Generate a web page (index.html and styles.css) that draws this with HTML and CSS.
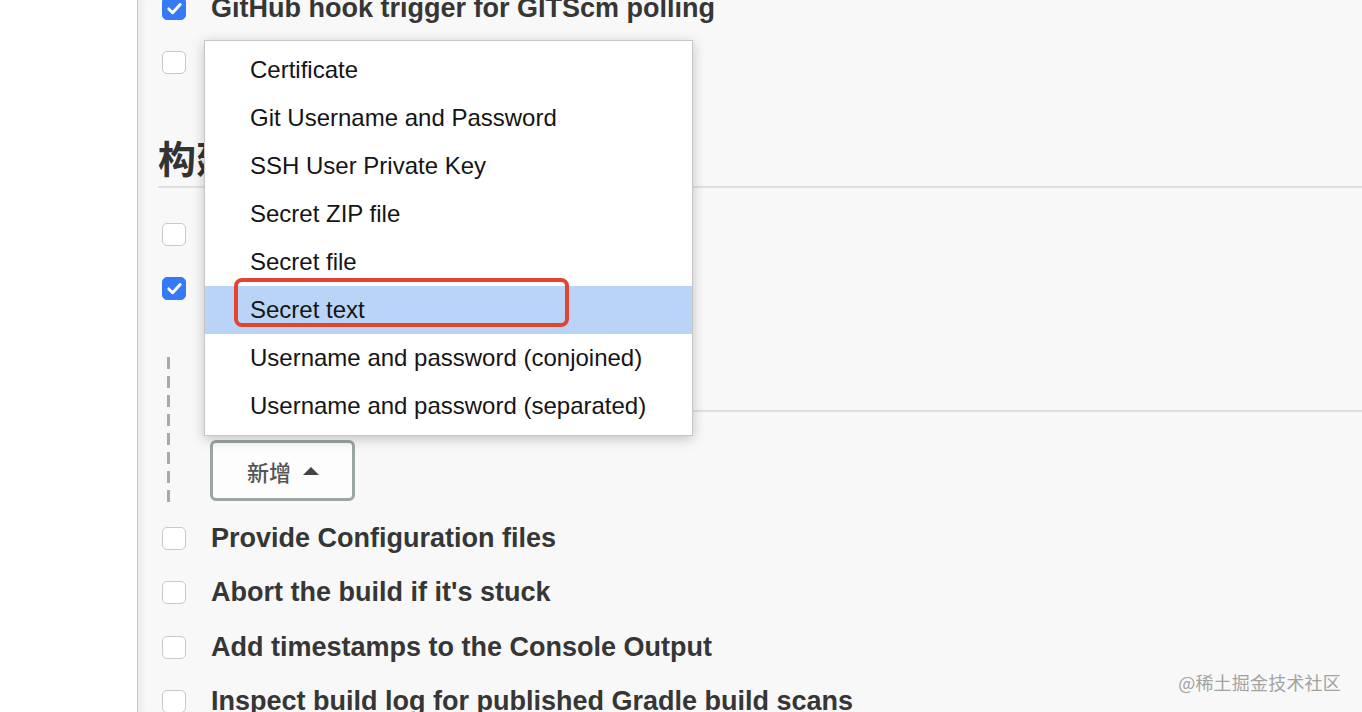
FILE: index.html
```html
<!DOCTYPE html>
<html lang="zh">
<head>
<meta charset="utf-8">
<title>Jenkins 构建环境</title>
<link rel="stylesheet" href="styles.css">
</head>
<body>
<div class="page">
  <aside class="side"></aside>
  <main class="main">
    <div class="rows top">
      <div class="row"><span class="cb checked"><svg viewBox="0 0 24 24"><path d="M5.5 12.5l4.3 4.3L18.5 7.5" fill="none" stroke="#fff" stroke-width="3.4" stroke-linecap="round" stroke-linejoin="round"/></svg></span><span class="lbl">GitHub hook trigger for GITScm polling</span></div>
      <div class="row"><span class="cb"></span><span class="lbl">Poll SCM</span></div>
    </div>
    <h2 class="section">构建环境</h2>
    <div class="rows">
      <div class="row"><span class="cb"></span><span class="lbl">Delete workspace</span></div>
      <div class="row"><span class="cb checked"><svg viewBox="0 0 24 24"><path d="M5.5 12.5l4.3 4.3L18.5 7.5" fill="none" stroke="#fff" stroke-width="3.4" stroke-linecap="round" stroke-linejoin="round"/></svg></span><span class="lbl">Use secret text(s) or file(s)</span></div>
    </div>
    <div class="nested">
      <div class="sub-head">绑定</div>
      <button class="add" type="button">新增<span class="tri"></span></button>
    </div>
    <div class="rows bottom">
      <div class="row"><span class="cb"></span><span class="lbl">Provide Configuration files</span></div>
      <div class="row"><span class="cb"></span><span class="lbl">Abort the build if it's stuck</span></div>
      <div class="row"><span class="cb"></span><span class="lbl">Add timestamps to the Console Output</span></div>
      <div class="row"><span class="cb"></span><span class="lbl">Inspect build log for published Gradle build scans</span></div>
    </div>
  </main>
</div>
<ul class="menu">
  <li class="item">Certificate</li>
  <li class="item">Git Username and Password</li>
  <li class="item">SSH User Private Key</li>
  <li class="item">Secret ZIP file</li>
  <li class="item">Secret file</li>
  <li class="item active">Secret text</li>
  <li class="item">Username and password (conjoined)</li>
  <li class="item">Username and password (separated)</li>
</ul>
<div class="mark-box"></div>
<div class="watermark">@稀土掘金技术社区</div>
</body>
</html>
```
FILE: styles.css
```css
html, body {
  margin: 0;
  padding: 0;
  height: 712px;
  overflow: hidden;
}
body {
  font-family: "Liberation Sans", Arial, "Noto Sans CJK SC", sans-serif;
  background: #fff;
  position: relative;
}
.page {
  display: flex;
  height: 712px;
}
.side {
  width: 137px;
  flex: none;
  background: #fff;
}
.main {
  flex: 1;
  background: #f8f8f8;
  border-left: 1px solid #c9c9c9;
  box-shadow: inset 8px 0 8px -6px rgba(0, 0, 0, 0.08);
  padding-left: 24px;
  overflow: hidden;
}
.rows {
  display: flex;
  flex-direction: column;
}
.top {
  margin-top: -19px;
}
.row {
  display: flex;
  align-items: center;
  height: 54px;
  gap: 25px;
}
.cb {
  width: 24px;
  height: 23px;
  box-sizing: border-box;
  border: 1px solid #c9c9c9;
  border-radius: 5px;
  background: #fff;
  flex: none;
  display: flex;
  align-items: center;
  justify-content: center;
}
.cb.checked {
  background: #3479f6;
  border-color: #3479f6;
}
.cb svg {
  width: 21px;
  height: 21px;
}
.lbl {
  font-size: 27px;
  font-weight: 700;
  color: #363636;
  white-space: nowrap;
}
.section {
  margin: 48px 0 19px -4px;
  font-family: "Noto Sans CJK SC", sans-serif;
  font-size: 38px;
  line-height: 40px;
  font-weight: 700;
  color: #333;
  padding-bottom: 9px;
  border-bottom: 2px solid #e0e0e0;
}
.nested {
  margin: 42px 0 0 5px;
  padding: 0 0 2px 43px;
  background: repeating-linear-gradient(to bottom, #a9a9a9 0 12px, transparent 12px 19px) no-repeat left top / 3px 100%;
  display: flex;
  flex-direction: column;
  align-items: flex-start;
}
.sub-head {
  align-self: stretch;
  height: 53px;
  border-bottom: 2px solid #e0e0e0;
  font-family: "Noto Sans CJK SC", sans-serif;
  font-size: 24px;
  line-height: 53px;
  font-weight: 700;
  color: #333;
}
.add {
  margin-top: 28px;
  width: 145px;
  height: 61px;
  box-sizing: border-box;
  border: 3px solid #9aa7a7;
  border-radius: 6px;
  background: #fdfdfd;
  font-family: "Noto Sans CJK SC", sans-serif;
  font-size: 22px;
  font-weight: 500;
  color: #555;
  padding: 0 0 0 34px;
  display: flex;
  align-items: center;
  gap: 12px;
}
.tri {
  width: 0;
  height: 0;
  border-left: 8px solid transparent;
  border-right: 8px solid transparent;
  border-bottom: 8px solid #444;
}
.bottom {
  margin-top: 8px;
}
.bottom .row {
  height: 54.5px;
}
.menu {
  position: absolute;
  left: 204px;
  top: 40px;
  width: 489px;
  height: 396px;
  box-sizing: border-box;
  margin: 0;
  padding: 5px 0;
  list-style: none;
  background: #fff;
  border: 1px solid #c6c6c6;
  box-shadow: 0 3px 12px rgba(0, 0, 0, 0.22);
}
.item {
  height: 48px;
  line-height: 48px;
  padding-left: 45px;
  font-size: 24px;
  color: #151515;
  white-space: nowrap;
}
.item.active {
  background: #b9d4f6;
}
.mark-box {
  position: absolute;
  left: 234px;
  top: 278px;
  width: 335px;
  height: 49px;
  box-sizing: border-box;
  border: 4px solid #e4432d;
  border-radius: 8px;
}
.watermark {
  position: absolute;
  right: 21px;
  top: 669px;
  font-family: "Noto Sans CJK SC", sans-serif;
  font-size: 18px;
  color: #a3a3a3;
  letter-spacing: 0.2px;
}
```
